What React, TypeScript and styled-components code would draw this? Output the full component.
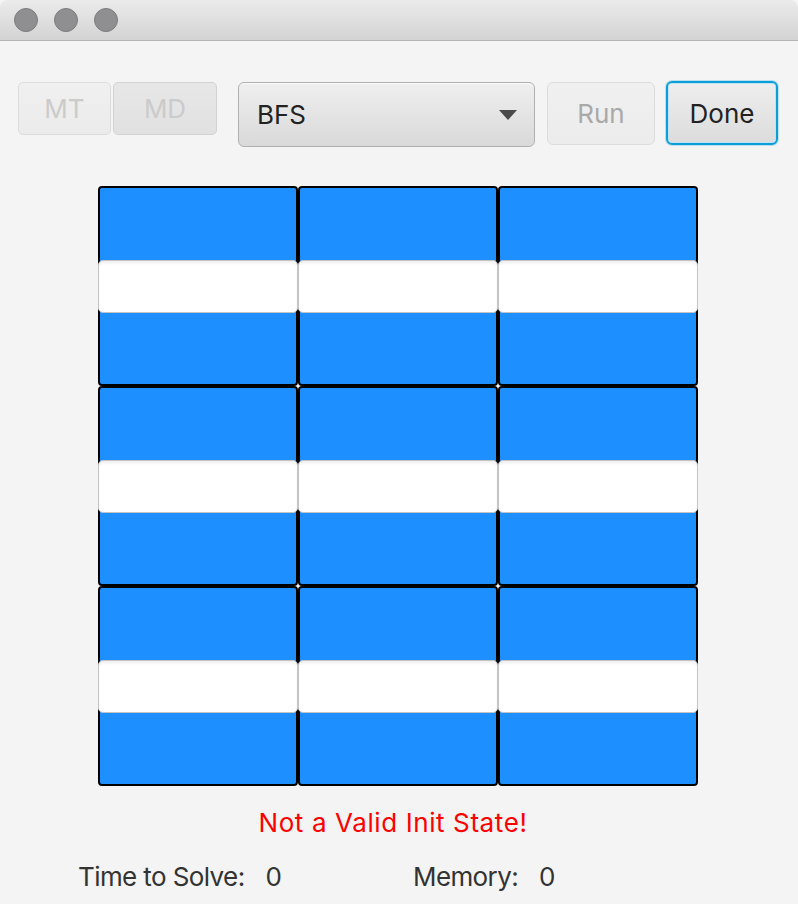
import React from "react";
import styled, { createGlobalStyle } from "styled-components";

const Global = createGlobalStyle`
  html, body { margin: 0; padding: 0; background: #f4f4f4; }
  body { font-family: Inter, "Noto Sans", "Liberation Sans", sans-serif; }
  * { box-sizing: border-box; }
`;

const Window = styled.div`
  width: 798px;
  height: 904px;
  background: #f4f4f4;
  display: flex;
  flex-direction: column;
  overflow: hidden;
`;

const TitleBar = styled.div`
  height: 41px;
  flex: none;
  display: flex;
  align-items: center;
  gap: 16px;
  padding-left: 14px;
  background: linear-gradient(#ebebeb, #d3d3d3);
  border-bottom: 1px solid #b4b4b4;
  border-radius: 8px 8px 0 0;
`;

const Light = styled.span`
  width: 24px;
  height: 24px;
  border-radius: 50%;
  background: #8f8e90;
  border: 1px solid #7c7b7d;
`;

const Toolbar = styled.div`
  display: flex;
  align-items: flex-start;
  padding: 41px 0 0 18px;
`;

const ToggleGroup = styled.div`
  display: flex;
  gap: 2px;
  margin-right: 21px;
`;

const Toggle = styled.div<{ $selected?: boolean; $w: number }>`
  width: ${(p) => p.$w}px;
  height: 53px;
  display: flex;
  align-items: center;
  justify-content: center;
  font-size: 26px;
  color: #cbcbcb;
  border-radius: 5px;
  border: 1px solid ${(p) => (p.$selected ? "#d2d2d2" : "#dcdcdc")};
  background: ${(p) =>
    p.$selected
      ? "linear-gradient(#e7e7e7, #e1e1e1)"
      : "linear-gradient(#f0f0f0, #ebebeb)"};
`;

const Combo = styled.div`
  width: 297px;
  height: 65px;
  margin-right: 12px;
  display: flex;
  align-items: center;
  justify-content: space-between;
  padding: 0 17px 0 18px;
  font-size: 26px;
  color: #222;
  border-radius: 6px;
  border: 1px solid #b0b0b0;
  background: linear-gradient(#efefef, #d9d9d9);
  box-shadow: inset 0 1px 0 #fafafa;
`;

const Arrow = styled.svg`
  width: 18px;
  height: 10px;
`;

const Button = styled.div<{ $disabled?: boolean; $focused?: boolean }>`
  width: ${(p) => (p.$focused ? 112 : 108)}px;
  height: ${(p) => (p.$focused ? 64 : 63)}px;
  margin-top: ${(p) => (p.$focused ? -1 : 0)}px;
  display: flex;
  align-items: center;
  justify-content: center;
  font-size: 26px;
  color: ${(p) => (p.$disabled ? "#a9a9a9" : "#222")};
  border-radius: 6px;
  border: ${(p) =>
    p.$focused ? "2px solid #0b9ed8" : p.$disabled ? "1px solid #dcdcdc" : "1px solid #b0b0b0"};
  background: ${(p) =>
    p.$disabled ? "linear-gradient(#f0f0f0, #ececec)" : "linear-gradient(#eeeeee, #dcdcdc)"};
  box-shadow: ${(p) =>
    p.$focused ? "0 0 0 1px rgba(11,158,216,0.25), inset 0 0 0 1px #bfe3f2" : "none"};
  margin-right: 11px;
`;

const Board = styled.div`
  margin: 39px 0 0 98px;
  width: 600px;
  display: grid;
  grid-template-columns: repeat(3, 200px);
  grid-template-rows: repeat(3, 200px);
`;

const Cell = styled.div`
  background: #1e8fff;
  border: 2px solid #000;
  border-radius: 4px;
  display: flex;
  flex-direction: column;
  justify-content: center;
`;

const Field = styled.div`
  height: 53px;
  margin: 0 -2px;
  background: #fff;
  border: 1px solid #c4c4c4;
  border-radius: 5px;
  box-shadow: inset 0 3px 3px -1px rgba(0, 0, 0, 0.07);
`;

const Message = styled.div`
  margin-top: 21px;
  padding-right: 12px;
  text-align: center;
  font-size: 26px;
  letter-spacing: 0.6px;
  color: #ff0000;
`;

const Stats = styled.div`
  margin-top: 23px;
  padding-left: 78px;
  display: grid;
  grid-template-columns: 335px auto;
  font-size: 26px;
  letter-spacing: -0.6px;
  color: #333;
`;

const Stat = styled.div`
  display: flex;
  gap: 21px;
`;

export default function App() {
  const cells = Array.from({ length: 9 });
  return (
    <>
      <Global />
      <Window>
        <TitleBar>
          <Light />
          <Light />
          <Light />
        </TitleBar>
        <Toolbar>
          <ToggleGroup>
            <Toggle $w={93}>MT</Toggle>
            <Toggle $w={104} $selected>
              MD
            </Toggle>
          </ToggleGroup>
          <Combo>
            <span>BFS</span>
            <Arrow viewBox="0 0 18 10">
              <polygon points="0,0 18,0 9,10" fill="#4a4a4a" />
            </Arrow>
          </Combo>
          <Button $disabled>Run</Button>
          <Button $focused>Done</Button>
        </Toolbar>
        <Board>
          {cells.map((_, i) => (
            <Cell key={i}>
              <Field />
            </Cell>
          ))}
        </Board>
        <Message>Not a Valid Init State!</Message>
        <Stats>
          <Stat>
            <span>Time to Solve:</span>
            <span>0</span>
          </Stat>
          <Stat>
            <span>Memory:</span>
            <span>0</span>
          </Stat>
        </Stats>
      </Window>
    </>
  );
}
